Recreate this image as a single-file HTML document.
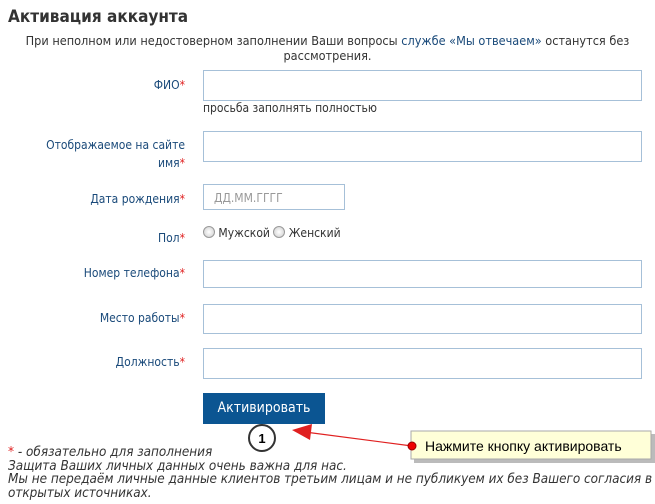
<!DOCTYPE html>
<html><head><meta charset="utf-8"><style>
body{margin:0;width:655px;height:504px;background:#fff;font-family:"DejaVu Sans",sans-serif;position:relative;overflow:hidden}
.a{position:absolute}
h1{position:absolute;left:8px;top:7px;margin:0;font-size:17px;font-weight:bold;color:#333;font-family:"DejaVu Sans Condensed","DejaVu Sans",sans-serif}
.lbl{position:absolute;right:470px;text-align:right;font-size:12px;color:#1a4a7a;font-family:"DejaVu Sans Condensed","DejaVu Sans",sans-serif;line-height:18px}
.lbl b{color:#e02020;font-weight:normal}
.in{position:absolute;left:203px;width:439px;border:1px solid #a6c0d8;background:#fff;box-sizing:border-box}
.t{font-size:12px;color:#333;font-family:"DejaVu Sans Condensed","DejaVu Sans",sans-serif}
.it{font-style:italic;font-size:13.4px;color:#333;font-family:"DejaVu Sans Condensed","DejaVu Sans",sans-serif;line-height:13.5px}
.r{display:inline-block;width:10px;height:10px;border-radius:50%;border:1px solid #999;background:radial-gradient(#fff,#ccc);vertical-align:-1px}
</style></head><body>
<h1>Активация аккаунта</h1>
<div class="a t" style="left:0;width:655px;top:33px;text-align:center;line-height:15px;font-size:12.6px">При неполном или недостоверном заполнении Ваши вопросы <span style="color:#1a4a7a">службе «Мы отвечаем»</span> останутся без<br>рассмотрения.</div>
<div class="lbl" style="top:76px">ФИО<b>*</b></div>
<div class="in" style="top:70px;height:31px"></div>
<div class="a t" style="left:203px;top:101px">просьба заполнять полностью</div>
<div class="lbl" style="top:136px">Отображаемое на сайте<br>имя<b>*</b></div>
<div class="in" style="top:131px;height:31px"></div>
<div class="lbl" style="top:190px">Дата рождения<b>*</b></div>
<div class="in" style="top:184px;height:26px;width:142px;font-size:12px;color:#999;padding:6px 0 0 10px;font-family:'DejaVu Sans Condensed',sans-serif">ДД.ММ.ГГГГ</div>
<div class="lbl" style="top:229px">Пол<b>*</b></div>
<div class="a t" style="left:203px;top:226px"><span class="r"></span> Мужской <span class="r"></span> Женский</div>
<div class="lbl" style="top:264px">Номер телефона<b>*</b></div>
<div class="in" style="top:260px;height:28px"></div>
<div class="lbl" style="top:309px">Место работы<b>*</b></div>
<div class="in" style="top:304px;height:30px"></div>
<div class="lbl" style="top:353px">Должность<b>*</b></div>
<div class="in" style="top:348px;height:31px"></div>
<div class="a" style="left:203px;top:393px;width:122px;height:31px;background:#0b5592;color:#fff;font-size:14px;text-align:center;line-height:31px;font-family:'DejaVu Sans Condensed',sans-serif">Активировать</div>
<svg class="a" style="left:0;top:0" width="655" height="504">
<circle cx="262" cy="438" r="13" fill="#fff" stroke="#333" stroke-width="2"/>
<text x="262" y="443" font-size="13" font-weight="bold" text-anchor="middle" font-family="Liberation Sans">1</text>
<line x1="412" y1="446" x2="305" y2="432" stroke="#e02020" stroke-width="1.2"/>
<polygon points="292,430 312,424 310,440" fill="#e02020"/>
<rect x="414" y="434" width="241" height="29" fill="#bbb"/>
<rect x="411" y="431" width="240" height="28" fill="#ffffd8" stroke="#aaa"/>
<circle cx="412" cy="446" r="4" fill="#e00" stroke="#900"/>
<text x="425" y="451" font-size="14" font-family="Liberation Sans">Нажмите кнопку активировать</text>
</svg>
<div class="a it" style="left:8px;top:446px"><span style="color:#e02020">*</span> - обязательно для заполнения<br>Защита Ваших личных данных очень важна для нас.<br>Мы не передаём личные данные клиентов третьим лицам и не публикуем их без Вашего согласия в<br>открытых источниках.</div>
</body></html>
